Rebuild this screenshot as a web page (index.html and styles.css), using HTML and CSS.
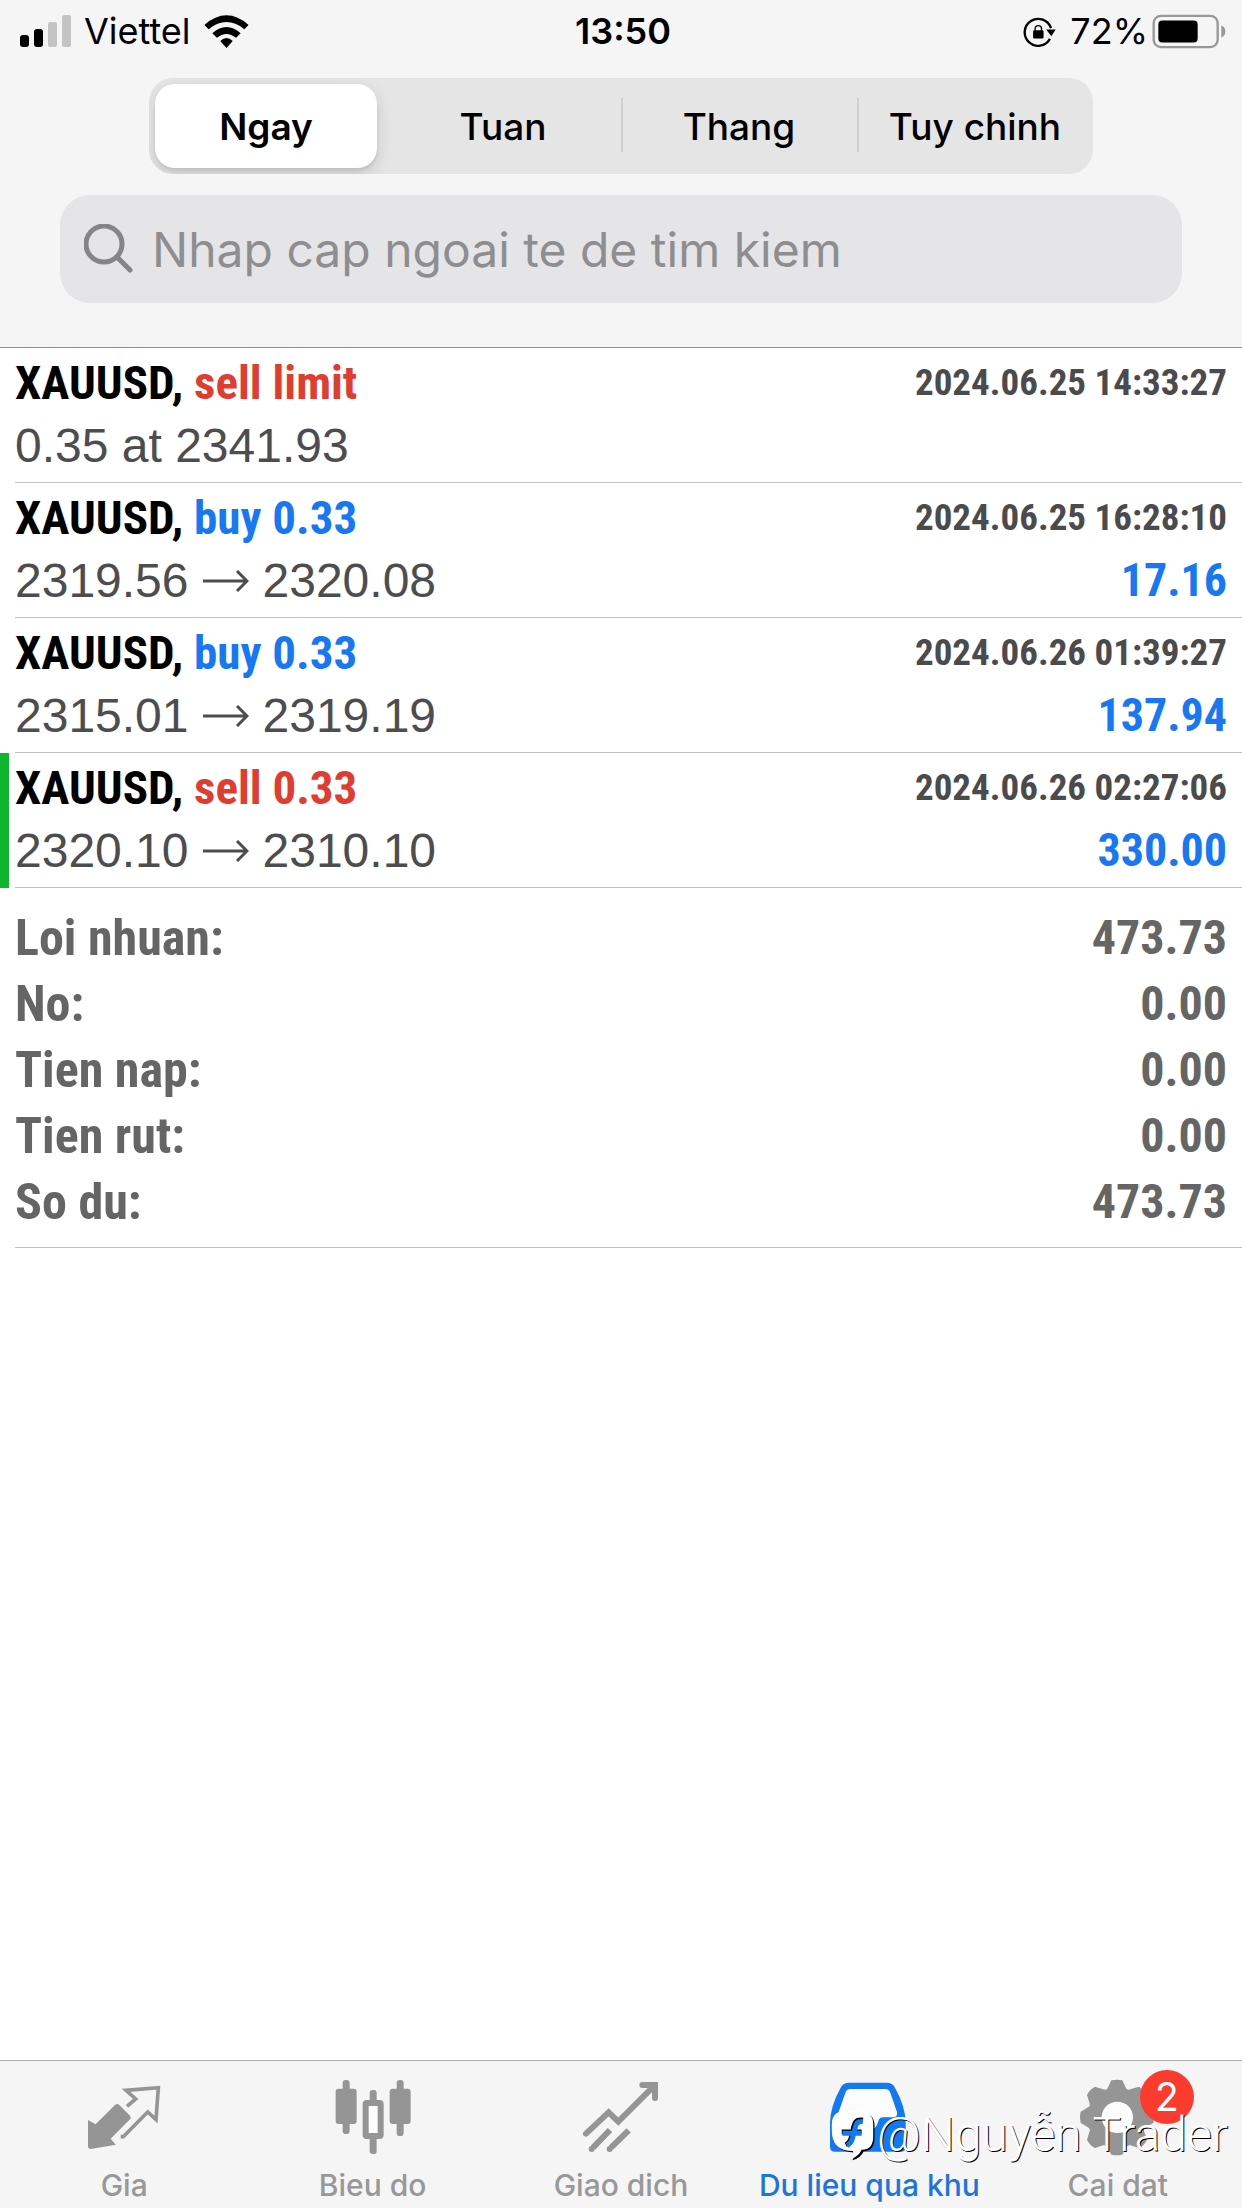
FILE: index.html
```html
<!DOCTYPE html>
<html lang="vi">
<head>
<meta charset="utf-8">
<meta name="viewport" content="width=device-width, initial-scale=1">
<title>Du lieu qua khu</title>
<link rel="stylesheet" href="styles.css">
</head>
<body>
<div class="app">
  <header class="header">
    <div class="status">
      <div class="status-group">
        <svg class="signal" viewBox="0 0 51 33" aria-hidden="true">
          <rect x="0" y="20" width="9" height="12" rx="3"/>
          <rect x="14" y="14" width="9" height="18" rx="3"/>
          <rect class="signal-off" x="28" y="7" width="9" height="25" rx="2"/>
          <rect class="signal-off" x="42" y="0" width="9" height="32" rx="2"/>
        </svg>
        <span class="carrier">Viettel</span>
        <svg class="wifi" viewBox="617 38 134 100" aria-hidden="true">
          <path d="M617 68Q684 10 751 68L738 81Q684 38 630 81Z"/>
          <path d="M641 93Q684 56 727 93L713 107Q684 84 655 107Z"/>
          <path d="M665 117Q684 98 703 117L684 138Z"/>
        </svg>
      </div>
      <time class="clock">13:50</time>
      <div class="status-group status-right">
        <svg class="lock" viewBox="588 48 98 92" aria-hidden="true">
          <path class="lock-ring" d="M668 116A40 40 0 1 1 671 84"/>
          <path d="M657 88H685L672 108Z"/>
          <rect x="618" y="90" width="31" height="25" rx="4"/>
          <path class="lock-bow" d="M624 92V86a9.500 9.500 0 0 1 19 0V92"/>
        </svg>
        <span>72%</span>
        <svg class="battery" viewBox="974 38 222 104" aria-hidden="true">
          <rect class="battery-case" x="979" y="43" width="192" height="94" rx="22"/>
          <rect x="993" y="57" width="118" height="66" rx="12"/>
          <path class="battery-tip" d="M1182 72Q1194 76 1194 90T1182 108Z"/>
        </svg>
      </div>
    </div>
    <div class="segments" role="group" aria-label="Khoang thoi gian">
      <button class="segment segment-active" type="button" aria-pressed="true">Ngay</button>
      <button class="segment" type="button" aria-pressed="false">Tuan</button>
      <button class="segment segment-divided" type="button" aria-pressed="false">Thang</button>
      <button class="segment segment-divided" type="button" aria-pressed="false">Tuy chinh</button>
    </div>
    <label class="search">
      <svg class="search-icon" viewBox="0 0 50 50" aria-hidden="true">
        <circle cx="20" cy="20" r="18"/><path d="M33 33L46 46"/>
      </svg>
      <input class="search-input" type="search" aria-label="Tim kiem" placeholder="Nhap cap ngoai te de tim kiem">
    </label>
  </header>

  <main class="content">
    <ul class="deals">
      <li class="deal"><div class="deal-body">
        <div class="line"><span class="symbol">XAUUSD, <span class="sell">sell limit</span></span><time class="date">2024.06.25 14:33:27</time></div>
        <div class="line"><span class="prices">0.35 at 2341.93</span></div>
      </div></li>
      <li class="deal"><div class="deal-body">
        <div class="line"><span class="symbol">XAUUSD, <span class="buy">buy 0.33</span></span><time class="date">2024.06.25 16:28:10</time></div>
        <div class="line"><span class="prices">2319.56<svg class="arrow" viewBox="0 0 46 22" role="img" aria-label="den"><path d="M0 11H44M34 1L44 11L34 21"/></svg>2320.08</span><span class="amount">17.16</span></div>
      </div></li>
      <li class="deal"><div class="deal-body">
        <div class="line"><span class="symbol">XAUUSD, <span class="buy">buy 0.33</span></span><time class="date">2024.06.26 01:39:27</time></div>
        <div class="line"><span class="prices">2315.01<svg class="arrow" viewBox="0 0 46 22" role="img" aria-label="den"><path d="M0 11H44M34 1L44 11L34 21"/></svg>2319.19</span><span class="amount">137.94</span></div>
      </div></li>
      <li class="deal deal-marked"><div class="deal-body">
        <div class="line"><span class="symbol">XAUUSD, <span class="sell">sell 0.33</span></span><time class="date">2024.06.26 02:27:06</time></div>
        <div class="line"><span class="prices">2320.10<svg class="arrow" viewBox="0 0 46 22" role="img" aria-label="den"><path d="M0 11H44M34 1L44 11L34 21"/></svg>2310.10</span><span class="amount">330.00</span></div>
      </div></li>
    </ul>
    <dl class="summary">
      <div class="total"><dt>Loi nhuan:</dt><dd>473.73</dd></div>
      <div class="total"><dt>No:</dt><dd>0.00</dd></div>
      <div class="total"><dt>Tien nap:</dt><dd>0.00</dd></div>
      <div class="total"><dt>Tien rut:</dt><dd>0.00</dd></div>
      <div class="total"><dt>So du:</dt><dd>473.73</dd></div>
    </dl>
  </main>

  <nav class="tabs">
    <a class="tab" href="#gia">
      <svg class="tab-icon" viewBox="246 75 252 252" aria-hidden="true">
        <path d="M264 210L287 223L345 165Q351 159 358 165L390 197Q395 203 390 208L332 266L347 284L272 297Q264 296 264 288Z"/>
        <path class="stroke-10" d="M381 169L407 147L378 121L475 113L468 209L443 186L370 260H362"/>
      </svg>
      <span>Gia</span>
    </a>
    <a class="tab" href="#bieu-do">
      <svg class="tab-icon" viewBox="994 75 252 252" aria-hidden="true">
        <rect x="1029" y="90" width="21" height="162" rx="10"/>
        <rect x="1008" y="116" width="63" height="106" rx="9"/>
        <rect x="1191" y="90" width="21" height="168" rx="10"/>
        <rect x="1170" y="116" width="63" height="106" rx="9"/>
        <rect x="1110" y="120" width="21" height="40" rx="9"/>
        <rect x="1110" y="255" width="21" height="57" rx="9"/>
        <rect class="candle" x="1098" y="159" width="45" height="99" rx="3"/>
      </svg>
      <span>Bieu do</span>
    </a>
    <a class="tab" href="#giao-dich">
      <svg class="tab-icon" viewBox="477 75 252 252" aria-hidden="true">
        <path class="stroke-17" d="M498 251L566 187L595 215L700 110M667 105H705V144"/>
        <path d="M680 97H713V130Z"/>
        <path class="stroke-17 butt" d="M519 293L570 240M573 293L626 241"/>
        <circle cx="515" cy="297" r="9"/><circle cx="569" cy="297" r="9"/>
      </svg>
      <span>Giao dich</span>
    </a>
    <a class="tab tab-active" href="#qua-khu" aria-current="page">
      <svg class="tab-icon" viewBox="81 75 252 252" aria-hidden="true">
        <path d="M148 98H259Q278 98 285 113Q317 170 317 220V290Q317 305 302 305H105Q90 305 90 290V220Q90 170 122 113Q129 98 148 98Z"/>
        <path class="icon-hole" d="M151 117Q141 117 137 126L116 186Q113 202 130 202H160Q170 202 173 214Q178 240 204 240Q230 240 235 214Q238 202 248 202H277Q295 202 291 186L270 126Q266 117 256 117Z"/>
      </svg>
      <span>Du lieu qua khu</span>
    </a>
    <a class="tab" href="#cai-dat">
      <span class="icon-wrap">
        <svg class="tab-icon" viewBox="828 75 252 252" aria-hidden="true">
          <path d="M934 91Q951 87 967 91L979 116Q984 121 991 118L1017 110Q1034 119 1041 135L1032 161Q1030 169 1037 172L1060 185Q1065 202 1060 219L1037 232Q1030 236 1032 243L1041 269Q1034 285 1017 294L991 286Q984 284 979 290L967 314Q951 318 934 314L922 290Q917 284 910 286L885 294Q868 285 861 269L869 243Q871 236 864 232L842 219Q837 202 842 185L864 172Q871 169 869 161L861 135Q868 119 885 110L910 118Q917 121 922 116Z"/>
          <circle class="icon-hole" cx="952" cy="202" r="47"/>
        </svg>
        <span class="badge">2</span>
      </span>
      <span>Cai dat</span>
    </a>
    <div class="watermark">
      <svg class="watermark-logo" viewBox="92 196 132 154" aria-hidden="true">
        <path class="logo-shadow" d="M138 204H184Q223 204 223 244V280Q223 320 190 321Q182 340 156 348Q164 334 162 324Q98 324 98 262V244Q98 204 138 204Z"/>
        <path class="logo-face" d="M134 200H180Q219 200 219 240V276Q219 316 184 316Q176 334 154 344Q162 330 158 320Q94 320 94 258V240Q94 200 134 200Z"/>
        <path class="logo-shadow-line" d="M188 226Q164 222 160 246L154 272Q150 294 136 301M124 262H184"/>
        <path class="logo-mark" d="M188 231Q168 228 165 248L158 276Q154 296 140 303M126 266H184"/>
      </svg>
      <span>@Nguyễn Trader</span>
    </div>
  </nav>
</div>
</body>
</html>
```

FILE: styles.css
```css
* { box-sizing: border-box; }

body {
  margin: 0;
  background: #fff;
  color: #000;
  font-family: Inter, "Liberation Sans", sans-serif;
}

.app {
  display: flex;
  flex-direction: column;
  min-height: 100vh;
}

/* Header */
.header {
  display: flex;
  flex-direction: column;
  align-items: center;
  padding-bottom: 44px;
  background: #f5f5f5;
  border-bottom: 1px solid #8e8e90;
}

.status {
  display: grid;
  grid-template-columns: 1fr auto 1fr;
  align-items: center;
  align-self: stretch;
  height: 62px;
  margin-bottom: 16px;
  padding: 0 16px 0 20px;
  font-size: 36px;
}

.status-group {
  display: flex;
  align-items: center;
  gap: 13px;
}

.status-right { justify-content: flex-end; gap: 4px; }
.clock { font-weight: 600; }
.signal { width: 51px; height: 33px; }
.signal-off { fill: #c4c4c4; }
.wifi { width: 45px; height: 33px; }
.lock { width: 33px; height: 31px; margin-right: 10px; }
.lock-ring { fill: none; stroke: #000; stroke-width: 7; }
.lock-bow { fill: none; stroke: #000; stroke-width: 4; }
.battery { width: 74px; height: 35px; }
.battery-case { fill: none; stroke: #98989a; stroke-width: 7; }
.battery-tip { fill: #98989a; }

.segments {
  display: grid;
  grid-template-columns: repeat(4, 1fr);
  width: 76%;
  height: 96px;
  margin-bottom: 21px;
  border-radius: 24px;
  background: #e5e5e6;
  overflow: hidden;
}

.segment {
  position: relative;
  padding: 0;
  border: 0;
  background: none;
  color: #000;
  font: 500 37px Inter, "Liberation Sans", sans-serif;
}

.segment-active {
  margin: 6px 8px 6px 6px;
  border-radius: 20px;
  background: #fff;
  box-shadow: 0 6px 16px rgba(0, 0, 0, 0.14), 0 3px 3px rgba(0, 0, 0, 0.06);
  font-weight: 600;
}

.segment-divided::before {
  content: "";
  position: absolute;
  left: 0;
  top: 20px;
  bottom: 22px;
  width: 2px;
  background: #cfcfd1;
}

.search {
  display: flex;
  align-items: center;
  gap: 18px;
  align-self: stretch;
  height: 108px;
  margin: 0 60px;
  padding: 0 24px;
  border-radius: 30px;
  background: #e5e5e7;
}

.search-icon {
  flex: none;
  width: 50px;
  height: 50px;
  fill: none;
  stroke: #858587;
  stroke-width: 5;
  stroke-linecap: round;
}

.search-input {
  flex: 1;
  min-width: 0;
  padding: 0;
  border: 0;
  outline: 0;
  background: none;
  font: 400 48px Inter, "Liberation Sans", sans-serif;
}

.search-input::placeholder { color: #8e8e90; opacity: 1; }

/* Deal list */
.content { flex: 1; }

.deals {
  margin: 0;
  padding: 0;
  list-style: none;
}

.deal {
  padding-left: 6px;
  border-left: 9px solid transparent;
}

.deal-marked { border-left-color: #0fb52d; }

.deal-body {
  padding: 3px 15px 5px 0;
  border-bottom: 1px solid #c0c0c2;
}

.line {
  display: flex;
  align-items: center;
  justify-content: space-between;
  line-height: 63px;
}

.symbol,
.date,
.amount,
.summary {
  font-family: "Roboto Condensed", "Liberation Sans Narrow", Roboto, sans-serif;
  font-weight: 700;
}

.symbol { font-size: 47px; }
.amount { font-size: 46px; }

.sell { color: #e03c2f; }
.buy,
.amount { color: #1877f2; }
.date { color: #4b4b4e; font-size: 37px; }

.prices {
  display: flex;
  align-items: center;
  gap: 14px;
  color: #4d4d50;
  font-family: "Liberation Sans", Arial, sans-serif;
  font-size: 48px;
}

.arrow {
  width: 46px;
  height: 22px;
  fill: none;
  stroke: #4d4d50;
  stroke-width: 3;
}

/* Totals */
.summary {
  margin: 0 0 0 15px;
  padding: 17px 15px 12px 0;
  border-bottom: 1px solid #c0c0c2;
  color: #656565;
  font-size: 50px;
  line-height: 66px;
}

.total {
  display: flex;
  justify-content: space-between;
}

.total dd { margin: 0; font-size: 48px; }

/* Tab bar */
.tabs {
  position: relative;
  display: grid;
  grid-template-columns: repeat(5, 1fr);
  padding: 14px 0 5px;
  border-top: 1px solid #adadaf;
  background: #f5f5f5;
}

.tab {
  display: flex;
  flex-direction: column;
  align-items: center;
  gap: 8px;
  color: #989898;
  fill: #959595;
  font-size: 30px;
  font-weight: 500;
  line-height: 36px;
  text-decoration: none;
  white-space: nowrap;
}

.tab-active { color: #1e74dc; fill: #1279f0; }
.tab-icon { display: block; width: 84px; height: 84px; }
.stroke-10 { fill: none; stroke: #959595; stroke-width: 11; }
.stroke-17 { fill: none; stroke: #959595; stroke-width: 18; stroke-linecap: round; }
.butt { stroke-linecap: butt; }
.candle { fill: #fff; stroke: #959595; stroke-width: 18; }
.icon-hole { fill: #fcfcfc; }
.icon-wrap { position: relative; }

.badge {
  position: absolute;
  left: 64px;
  top: -5px;
  width: 54px;
  height: 54px;
  border-radius: 50%;
  background: #fc3b2f;
  color: #fff;
  font-size: 39px;
  font-weight: 400;
  line-height: 54px;
  text-align: center;
}

.watermark {
  position: absolute;
  right: 14px;
  top: 46px;
  display: flex;
  align-items: center;
  gap: 2px;
  color: #fff;
  font-family: Roboto, "Noto Sans", sans-serif;
  font-size: 48px;
  font-weight: 300;
  line-height: 56px;
  text-shadow: 1px 1px 0 #000;
  pointer-events: none;
}

.watermark-logo { width: 44px; height: 51px; }
.logo-shadow { fill: #000; }
.logo-face { fill: #fff; }
.logo-shadow-line { fill: none; stroke: #000; stroke-width: 14; }
.logo-mark { fill: none; stroke: #1279f0; stroke-width: 15; }
```
